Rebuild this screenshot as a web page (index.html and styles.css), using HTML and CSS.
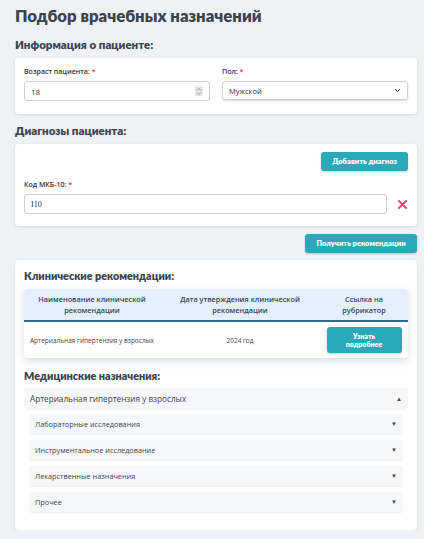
FILE: index.html
```html
<!DOCTYPE html>
<html lang="ru">
<head>
<meta charset="utf-8">
<link rel="stylesheet" href="styles.css">
</head>
<body>
<div class="page">
  <h1 class="title">Подбор врачебных назначений</h1>
  <h2 class="section">Информация о пациенте:</h2>
  <div class="card patient">
    <div class="field">
      <label class="label">Возраст пациента: <span class="req">*</span></label>
      <div class="input num">18<span class="spin"><svg width="6" height="9" viewBox="0 0 6 9"><path d="M1 3.5L3 1.5L5 3.5M1 5.5L3 7.5L5 5.5" fill="none" stroke="#777" stroke-width="0.8"/></svg></span></div>
    </div>
    <div class="field">
      <label class="label">Пол: <span class="req">*</span></label>
      <div class="input select">Мужской<svg width="7" height="5" viewBox="0 0 7 5"><path d="M1 1L3.5 3.5L6 1" fill="none" stroke="#444" stroke-width="1"/></svg></div>
    </div>
  </div>

  <h2 class="section">Диагнозы пациента:</h2>
  <div class="card diag">
    <div class="diag-top"><button class="btn">Добавить диагноз</button></div>
    <label class="label">Код МКБ-10: <span class="req">*</span></label>
    <div class="diag-row">
      <div class="input grow">I10</div>
      <svg class="xicon" width="9" height="9" viewBox="0 0 9 9"><path d="M1 1L8 8M8 1L1 8" stroke="#e8436a" stroke-width="2" stroke-linecap="round"/></svg>
    </div>
  </div>
  <div class="get-row"><button class="btn">Получить рекомендации</button></div>

  <div class="card results">
    <h3 class="sub">Клинические рекомендации:</h3>
    <div class="table">
      <div class="thead">
        <div class="c1">Наименование клинической рекомендации</div>
        <div class="c2">Дата утверждения клинической рекомендации</div>
        <div class="c3">Ссылка на рубрикатор</div>
      </div>
      <div class="trow">
        <div class="c1 left">Артериальная гипертензия у взрослых</div>
        <div class="c2">2024 год</div>
        <div class="c3"><button class="btn more">Узнать подробнее</button></div>
      </div>
    </div>
    <h3 class="sub med">Медицинские назначения:</h3>
    <div class="acc-head"><span>Артериальная гипертензия у взрослых</span><span class="arr">▲</span></div>
    <div class="acc-list">
      <div class="acc-item"><span>Лабораторные исследования</span><span class="arr">▼</span></div>
      <div class="acc-item"><span>Инструментальное исследование</span><span class="arr">▼</span></div>
      <div class="acc-item"><span>Лекарственные назначения</span><span class="arr">▼</span></div>
      <div class="acc-item"><span>Прочее</span><span class="arr">▼</span></div>
    </div>
  </div>
</div>
</body>
</html>
```
FILE: styles.css
```css
* { box-sizing: border-box; }
html, body { margin: 0; padding: 0; }
body { background: #eef2f7; font-family: "Open Sans", "Noto Sans", sans-serif; color: #3b4350; }
.page { padding: 5px 7px 0 15px; width: 424px; }
.title { font-family: Lato, "Open Sans", sans-serif; font-size: 16.7px; font-weight: 800; margin: 0 0 10px; line-height: 22px; color: #3b4350; }
.section { font-family: Lato, "Open Sans", sans-serif; font-size: 11.5px; font-weight: 800; margin: 0 0 5px; line-height: 16px; color: #3b4350; }
.card { background: #fff; border-radius: 4px; box-shadow: 0 1px 3px rgba(80,100,130,0.18); }
.patient { display: grid; grid-template-columns: 1fr 1fr; gap: 12px; padding: 9px 9px 0; margin-bottom: 9px; height: 56px; }
.label { display: block; font-size: 7px; color: #333; font-weight: 600; line-height: 10px; margin-bottom: 4px; }
.req { color: #e33; }
.input { height: 20px; border: 1px solid #ccd1d8; border-radius: 3px; font-size: 7.5px; color: #333; padding: 0 6px; display: flex; align-items: center; justify-content: space-between; font-family: "Open Sans", sans-serif; }
.num { font-size: 8px; }
.spin { width: 8px; height: 10px; background: #e9e9ec; display: flex; align-items: center; justify-content: center; border-radius: 1px; }
.select { height: 19px; box-shadow: 0 1px 2px rgba(0,0,0,0.15); }
.diag { padding: 8px 9px 0; margin-bottom: 8px; height: 82px; }
.diag-top { display: flex; justify-content: flex-end; margin-bottom: 9px; }
.btn { background: #2aa9b8; color: #fff; border: none; border-radius: 3px; font-family: Lato, "Open Sans", sans-serif; font-weight: 800; font-size: 7.5px; height: 19px; padding: 0 9px; box-shadow: 0 1px 2px rgba(0,0,0,0.2); }
.diag-top .btn { width: 87px; padding: 0; }
.diag-row { display: flex; align-items: center; gap: 11px; }
.grow { flex: 1; font-family: "Liberation Serif", serif; font-size: 8px; }
.xicon { margin-right: 1px; }
.get-row { display: flex; justify-content: flex-end; margin-bottom: 7px; }
.get-row .btn { width: 112px; padding: 0; }
.results { padding: 9px 9px 0; height: 270px; }
.sub { font-family: Lato, "Open Sans", sans-serif; font-size: 10.8px; font-weight: 800; margin: 0 0 6px; line-height: 14px; color: #3b4350; }
.table { border-radius: 4px; box-shadow: 0 3px 8px rgba(80,100,130,0.22); overflow: hidden; margin-bottom: 11px; }
.thead { display: grid; grid-template-columns: 136px 160px 1fr; background: #e3f0fb; height: 33px; border-bottom: 2px solid #2e6a90; align-items: center; text-align: center; font-size: 7.3px; font-weight: 600; line-height: 11px; color: #3b4350; }
.trow { display: grid; grid-template-columns: 136px 160px 1fr; height: 36px; align-items: center; text-align: center; font-size: 6.5px; color: #444; background: #fff; }
.thead .c1 { padding: 0 10px; }
.thead .c3 { padding: 0 18px; }
.left { text-align: left; padding-left: 6px; }
.more { width: 75px; height: 26px; padding: 0 14px; line-height: 8px; font-size: 7px; }
.med { margin-bottom: 5px; }
.acc-head { display: flex; justify-content: space-between; align-items: center; height: 21px; background: #f6f7f9; border-radius: 3px; padding: 0 6px; font-size: 8.2px; box-shadow: 0 1px 1px rgba(0,0,0,0.06); margin-bottom: 5px; }
.acc-list { display: flex; flex-direction: column; gap: 6px; padding: 0 5px; }
.acc-item { display: flex; justify-content: space-between; align-items: center; height: 20px; background: #f6f7f9; border-radius: 3px; padding: 0 6px; font-size: 7.3px; box-shadow: 0 1px 1px rgba(0,0,0,0.06); }
.arr { font-size: 6px; color: #3b4350; }
```
